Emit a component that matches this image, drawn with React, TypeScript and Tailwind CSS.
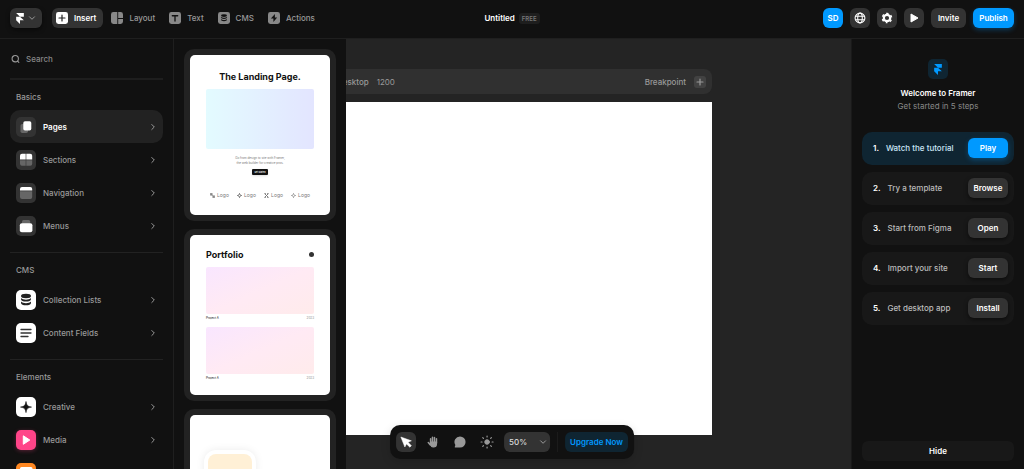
import React from "react";
import type { ReactNode } from "react";

function FramerLogo({ className }: { className?: string }) {
  return (
    <svg viewBox="0 0 14 20" className={className} fill="currentColor" aria-hidden="true">
      <path d="M0 0h14v6.67H7zM0 6.67h14v0L7 6.67l7 6.66H0zM0 13.33h7V20z" />
    </svg>
  );
}

function Chevron({ className, down }: { className?: string; down?: boolean }) {
  return (
    <svg viewBox="0 0 8 8" className={className} fill="none" stroke="currentColor" strokeWidth="1" strokeLinecap="round" strokeLinejoin="round" aria-hidden="true">
      <path d={down ? "M1.5 2.8 4 5.3l2.5-2.5" : "M2.8 1.5 5.3 4 2.8 6.5"} />
    </svg>
  );
}

function Disks({ fill }: { fill: string }) {
  return (
    <g fill={fill}>
      <ellipse cx="10" cy="6" rx="5" ry="2.2" />
      <path d="M5 8c1 1.300 3 1.700 5 1.700s4-.4 5-1.700v1.200c0 1.400-2.200 2.300-5 2.300s-5-.9-5-2.300z" />
      <path d="M5 11.600c1 1.300 3 1.700 5 1.700s4-.4 5-1.700v1.300c0 1.400-2.200 2.400-5 2.400s-5-1-5-2.400z" />
    </g>
  );
}

const navItems: { label: string; icon: ReactNode; active?: boolean }[] = [
  {
    label: "Insert",
    active: true,
    icon: (
      <svg viewBox="0 0 20 20" className="size-3" aria-hidden="true">
        <rect width="20" height="20" rx="4" fill="#fff" />
        <path d="M10 5v10M5 10h10" stroke="#222" strokeWidth="2" strokeLinecap="round" />
      </svg>
    ),
  },
  {
    label: "Layout",
    icon: (
      <svg viewBox="0 0 20 20" className="size-3" fill="#888" aria-hidden="true">
        <path d="M4 0h6.500v20H4a4 4 0 0 1-4-4V4a4 4 0 0 1 4-4zM12 0h4a4 4 0 0 1 4 4v6h-8zM12 11.500h8V16a4 4 0 0 1-4 4h-4z" />
      </svg>
    ),
  },
  {
    label: "Text",
    icon: (
      <svg viewBox="0 0 20 20" className="size-3" aria-hidden="true">
        <rect width="20" height="20" rx="4" fill="#888" />
        <path d="M5.500 6.200h9M10 6.200V15" stroke="#111" strokeWidth="2.200" strokeLinecap="round" />
      </svg>
    ),
  },
  {
    label: "CMS",
    icon: (
      <svg viewBox="0 0 20 20" className="size-3" aria-hidden="true">
        <rect width="20" height="20" rx="4" fill="#888" />
        <Disks fill="#111" />
      </svg>
    ),
  },
  {
    label: "Actions",
    icon: (
      <svg viewBox="0 0 20 20" className="size-3" aria-hidden="true">
        <rect width="20" height="20" rx="4" fill="#888" />
        <path d="M11.500 3.500 4.800 11H9v5.500L15.300 9h-3.800z" fill="#111" />
      </svg>
    ),
  },
];

function Header() {
  const tool = "flex h-5 items-center justify-center rounded-md bg-[#333] text-white";
  return (
    <header className="grid h-[39px] shrink-0 grid-cols-[1fr_auto_1fr] items-center border-b border-[#1f1f1f] px-2.5 pb-[2px]">
      <div className="flex items-center">
        <button aria-label="Main menu" className={`${tool} mr-2.5 w-8 gap-1 shadow-[0_2px_4px_rgba(0,0,0,0.5)]`}>
          <FramerLogo className="h-[11px] w-2" />
          <Chevron down className="size-2 text-[#999]" />
        </button>
        <nav className="flex items-center gap-[6px]">
          {navItems.map((n) => (
            <button
              key={n.label}
              className={
                n.active
                  ? "flex h-5 items-center gap-[6px] rounded-md bg-[#333] px-1 pr-[7px] font-semibold text-white"
                  : "flex h-5 items-center gap-[6px] rounded-md pl-[2px] pr-[6px] font-medium text-[#999]"
              }
            >
              {n.icon}
              {n.label}
            </button>
          ))}
        </nav>
      </div>
      <div className="flex items-center gap-1">
        <h1 className="font-semibold text-white">Untitled</h1>
        <span className="rounded-[3px] bg-[#1e1e1e] px-[3px] text-[6px] font-semibold leading-[11px] text-[#777]">FREE</span>
      </div>
      <div className="flex items-center justify-end gap-[7px] font-semibold">
        <button className="h-5 w-5 rounded-md bg-[#09f] text-center text-white">SD</button>
        <button aria-label="Language" className={`${tool} w-5`}>
          <svg viewBox="0 0 12 12" className="size-3" fill="none" stroke="currentColor" strokeWidth="1.100" aria-hidden="true">
            <circle cx="6" cy="6" r="4.900" />
            <ellipse cx="6" cy="6" rx="2.300" ry="4.900" />
            <path d="M1.400 4.300h9.200M1.400 7.700h9.200" />
          </svg>
        </button>
        <button aria-label="Settings" className={`${tool} w-5`}>
          <svg viewBox="0 0 12 12" className="size-3" fill="none" stroke="currentColor" aria-hidden="true">
            <circle cx="6" cy="6" r="3.200" strokeWidth="2.200" />
            <circle cx="6" cy="6" r="4.600" strokeWidth="1.500" strokeDasharray="2.400 2.417" strokeDashoffset="1.200" transform="rotate(90 6 6)" />
          </svg>
        </button>
        <button aria-label="Preview" className={`${tool} w-5`}>
          <svg viewBox="0 0 12 12" className="size-3" fill="currentColor" stroke="currentColor" strokeLinejoin="round" aria-hidden="true">
            <path d="M3 2v8l7-4z" />
          </svg>
        </button>
        <button className={`${tool} w-[35px]`}>Invite</button>
        <button className="h-5 w-[41px] rounded-md bg-[#09f] text-white shadow-[0_2px_5px_rgba(0,153,255,0.3)]">Publish</button>
      </div>
    </header>
  );
}

const darkTile = "bg-[#333]";
const whiteTile = "bg-white";

const groups: { title: string; rows: { label: string; iconOnly?: boolean; tile: string; active?: boolean; icon: ReactNode }[] }[] = [
  {
    title: "Basics",
    rows: [
      {
        label: "Pages",
        tile: darkTile,
        active: true,
        icon: (
          <>
            <rect x="4.500" y="7" width="7.500" height="9" rx="1.700" fill="#666" />
            <rect x="7.300" y="4.300" width="8" height="9.200" rx="1.700" fill="#fff" />
          </>
        ),
      },
      {
        label: "Sections",
        tile: darkTile,
        icon: (
          <>
            <path d="M6 3.800h3.700v5.700H4V5.800a2 2 0 0 1 2-2zM10.300 3.800H14.200a2 2 0 0 1 2 2v3.700h-5.900z" fill="#fff" />
            <path d="M4 10.200h5.700v5.600H6a2 2 0 0 1-2-2zM10.300 10.200h5.900v3.600a2 2 0 0 1-2 2h-3.900z" fill="#666" />
          </>
        ),
      },
      {
        label: "Navigation",
        tile: darkTile,
        icon: (
          <>
            <path d="M4 8.200h12.200v5.800a2 2 0 0 1-2 2H6a2 2 0 0 1-2-2z" fill="#666" />
            <path d="M6 4h8.200a2 2 0 0 1 2 2v1.500H4V6a2 2 0 0 1 2-2z" fill="#fff" />
          </>
        ),
      },
      {
        label: "Menus",
        tile: darkTile,
        icon: (
          <>
            <rect x="6" y="4" width="8.200" height="4" rx="1.500" fill="#666" />
            <rect x="3.800" y="7.200" width="12.600" height="9" rx="2" fill="#fff" />
          </>
        ),
      },
    ],
  },
  {
    title: "CMS",
    rows: [
      { label: "Collection Lists", tile: whiteTile, icon: <Disks fill="#222" /> },
      {
        label: "Content Fields",
        tile: whiteTile,
        icon: <path d="M5 6.500h10M5 10h10M5 13.500h7" stroke="#333" strokeWidth="1.300" strokeLinecap="round" />,
      },
    ],
  },
  {
    title: "Elements",
    rows: [
      {
        label: "Creative",
        tile: whiteTile,
        icon: <path d="M10 4.500c.7 4 1.600 4.900 5.500 5.600-3.900.7-4.800 1.600-5.500 5.500-.7-3.900-1.600-4.800-5.500-5.500 3.900-.7 4.800-1.600 5.500-5.600z" fill="#111" stroke="#111" strokeWidth=".6" />,
      },
      {
        label: "Media",
        tile: "bg-[#ff4488] shadow-[0_1px_4px_rgba(255,68,136,0.3)]",
        icon: <path d="M7.300 5.800v8.500l6.500-4.250z" fill="#fff" stroke="#fff" strokeLinejoin="round" />,
      },
      {
        label: "Forms",
        iconOnly: true,
        tile: "bg-[#ff8822]",
        icon: <rect x="4" y="4" width="12.500" height="5.500" rx="1.500" fill="#fff" />,
      },
    ],
  },
];

function Sidebar() {
  return (
    <aside className="w-[174px] shrink-0 overflow-hidden border-r border-[#1f1f1f] px-2.5">
      <label className="flex h-[41px] items-center gap-[6px] border-b-2 border-[#1e1e1e] px-[1px]">
        <svg viewBox="0 0 10 10" className="size-2.5 text-[#999]" fill="none" stroke="currentColor" strokeWidth="1.200" strokeLinecap="round" aria-hidden="true">
          <circle cx="4.700" cy="4.700" r="3.500" />
          <path d="m7.300 7.300 1.400 1.400" />
        </svg>
        <input aria-label="Search" placeholder="Search" className="w-full min-w-0 bg-transparent font-medium outline-none placeholder:text-[#888]" />
      </label>
      {groups.map((g) => (
        <section key={g.title} className="border-b border-[#222] pb-2.5">
          <h2 className="flex h-[30px] items-center px-[6px] pt-1 font-medium text-[#999]">{g.title}</h2>
          <ul>
            {g.rows.map((r) => (
              <li key={r.label}>
                <button
                  aria-label={r.label}
                  className={
                    r.active
                      ? "flex h-[33px] w-full items-center gap-[7px] rounded-[10px] bg-[#222] px-[6px] font-semibold text-white"
                      : "flex h-[33px] w-full items-center gap-[7px] rounded-[10px] px-[6px] font-medium text-[#999]"
                  }
                >
                  <span className={`size-5 rounded-[5px] ${r.tile}`}>
                    <svg viewBox="0 0 20 20" className="size-5" fill="none" aria-hidden="true">{r.icon}</svg>
                  </span>
                  {!r.iconOnly && r.label}
                  {!r.iconOnly && <Chevron className="ml-auto size-2 text-[#999]" />}
                </button>
              </li>
            ))}
          </ul>
        </section>
      ))}
    </aside>
  );
}

const logoMarks: ReactNode[] = [
  <path key="a" d="M.5.500h3v3h-3zM4.500 4.500h3v3h-3zM3 3l2 2" fill="#888" stroke="#888" />,
  <path key="b" d="M4 0v3M4 5v3M0 4h3M5 4h3M2 2l1 1M6 2 5 3M2 6l1-1M6 6 5 5" stroke="#777" strokeWidth="1.400" />,
  <path key="c" d="M1 1l6 6M7 1 1 7M1 1h2M7 1H5M1 7h2M7 7H5" stroke="#777" strokeWidth="1.500" />,
  <path key="d" d="M4 0 5.500 2.500h-3zM4 8 2.500 5.500h3zM0 4l2.500-1.500v3zM8 4 5.500 5.500v-3z" fill="#777" />,
];

function Card({ children, label }: { children: ReactNode; label: string }) {
  return (
    <article aria-label={label} className="h-[172px] shrink-0 rounded-[10px] bg-[#222] p-[6px]">
      <div className="flex h-full flex-col overflow-hidden rounded-[5px] bg-white px-4 text-[#111]">{children}</div>
    </article>
  );
}

function Project() {
  return (
    <div>
      <div className="h-[47px] rounded-[2px] bg-linear-to-br from-[#f9e6ff] via-[#ffeaf4] to-[#ffebeb]" />
      <div className="mt-[2px] flex justify-between text-[3px] leading-[4px]">
        <span>Project A</span>
        <span className="text-[#888]">2023</span>
      </div>
    </div>
  );
}

function Previews() {
  return (
    <div className="flex w-[172px] shrink-0 flex-col gap-2 overflow-hidden px-2.5 pt-2.5">
      <Card label="Landing page">
        <h3 className="mt-[15px] text-center text-[9px] font-bold leading-[14px]">The Landing Page.</h3>
        <div className="mt-[5px] h-[60px] shrink-0 rounded-[2px] bg-linear-to-r from-[#e3fbff] to-[#e3e5ff]" />
        <p className="mt-[7px] text-center text-[3px] leading-[5px] text-[#777]">
          Go from design to site with Framer,
          <br />
          the web builder for creative pros.
        </p>
        <span className="mx-auto mt-[3px] rounded-[1px] bg-[#111] px-[2px] text-[2px] font-semibold leading-[6px] text-white shadow">Get Started</span>
        <div className="mt-4 flex justify-between px-1 text-[5px] leading-2 text-[#777]">
          {logoMarks.map((m, i) => (
            <span key={i} className="flex items-center gap-[2px]">
              <svg viewBox="0 0 8 8" className="size-[5px]" fill="none" aria-hidden="true">{m}</svg>
              Logo
            </span>
          ))}
        </div>
      </Card>
      <Card label="Portfolio">
        <div className="mb-[5px] mt-3 flex h-[15px] items-center justify-between">
          <h3 className="text-[9px] font-bold">Portfolio</h3>
          <span className="size-[5px] rounded-full bg-[#333]" />
        </div>
        <div className="flex flex-col gap-[7px]">
          <Project />
          <Project />
        </div>
      </Card>
      <Card label="App">
        <div className="-ml-[2px] mt-[35px] size-[52px] rounded-xl bg-white p-1 shadow-[0_0_8px_rgba(0,0,0,0.08)]">
          <div className="h-full rounded-lg bg-[#fff0d6]" />
        </div>
      </Card>
    </div>
  );
}

function Canvas() {
  return (
    <main className="flex min-w-0 flex-1 justify-end overflow-hidden bg-[#242424] pb-[34px] pr-[139px] pt-[30px]">
      <div className="flex w-[392px] shrink-0 flex-col gap-2">
        <div className="flex h-[25px] items-center gap-2 rounded-lg bg-[#303030] pl-[17px] pr-[6px] text-[#999]">
          <span className="font-medium">Desktop</span>
          <span>1200</span>
          <span className="ml-auto font-medium">Breakpoint</span>
          <button aria-label="Add breakpoint" className="flex size-3 items-center justify-center rounded-[3px] bg-[#424242]">
            <svg viewBox="0 0 8 8" className="size-2" stroke="currentColor" strokeWidth="1.200" strokeLinecap="round" aria-hidden="true">
              <path d="M4 1v6M1 4h6" />
            </svg>
          </button>
        </div>
        <div className="flex-1 bg-white" />
      </div>
    </main>
  );
}

const steps = [
  { text: "Watch the tutorial", action: "Play" },
  { text: "Try a template", action: "Browse" },
  { text: "Start from Figma", action: "Open" },
  { text: "Import your site", action: "Start" },
  { text: "Get desktop app", action: "Install" },
];

function Welcome() {
  return (
    <aside className="flex w-[173px] shrink-0 flex-col border-l border-[#1a1a1a] px-2.5 pb-2 pt-5">
      <div className="mx-auto flex size-5 items-center justify-center rounded-[5px] bg-[#0f2532] text-[#09f]">
        <FramerLogo className="h-[11px] w-2" />
      </div>
      <h2 className="mt-2 text-center font-semibold leading-[13px] text-white">Welcome to Framer</h2>
      <p className="text-center leading-[13px] text-[#888]">Get started in 5 steps</p>
      <ol className="mt-[19px] flex flex-col gap-[7px]">
        {steps.map((s, i) => (
          <li
            key={s.text}
            className={
              i === 0
                ? "flex h-[33px] items-center rounded-[10px] bg-[#0f2532] pb-px pl-[11px] pr-[6px] text-[#cce6f7]"
                : "flex h-[33px] items-center rounded-[10px] bg-[#181818] pb-px pl-[11px] pr-[6px] text-[#bbb]"
            }
          >
            <span className="mr-[7px] font-semibold text-white">{i + 1}.</span>
            <span className="font-medium">{s.text}</span>
            <button
              className={
                i === 0
                  ? "ml-auto h-5 w-10 rounded-md bg-[#09f] font-semibold text-white shadow-[0_2px_5px_rgba(0,153,255,0.3)]"
                  : "ml-auto h-5 w-10 rounded-md bg-[#333] font-semibold text-white shadow-[0_2px_4px_rgba(0,0,0,0.5)]"
              }
            >
              {s.action}
            </button>
          </li>
        ))}
      </ol>
      <button className="mt-auto h-5 rounded-md bg-[#181818] font-semibold text-white">Hide</button>
    </aside>
  );
}

function Toolbar() {
  const item = "flex size-5 items-center justify-center rounded-md";
  return (
    <div className="absolute bottom-2.5 left-1/2 flex h-[34px] -translate-x-1/2 items-center gap-[7px] rounded-[10px] bg-[#111] px-[6px] text-[#999] shadow-[0_3px_10px_rgba(0,0,0,0.15)]">
      <button aria-label="Select" className={`${item} bg-[#333] text-white`}>
        <svg viewBox="0 0 12 12" className="size-3" aria-hidden="true">
          <path d="M.8 1 11.300 4.800 8 6.300l3.300 3.400-1.500 1.500-3.400-3.300L4.800 11z" fill="currentColor" stroke="currentColor" strokeWidth=".5" strokeLinejoin="round" />
        </svg>
      </button>
      <button aria-label="Pan" className={item}>
        <svg viewBox="0 0 12 12" className="size-3" fill="none" stroke="currentColor" strokeWidth="1.500" strokeLinecap="round" strokeLinejoin="round" aria-hidden="true">
          <path d="M3.500 7V2.700M5.400 6V1.200M7.400 6V1.400M9.400 7V2.800M1.200 6.500 3.300 9" />
          <path d="M3.500 6h5.900v2a3 3 0 0 1-3 3H6C4.700 11 4 10 3.500 8.500z" fill="currentColor" strokeWidth="1.200" />
        </svg>
      </button>
      <button aria-label="Comment" className={item}>
        <svg viewBox="0 0 12 12" className="size-3" fill="currentColor" aria-hidden="true">
          <path d="M6 .5a5.500 5.500 0 1 1 0 11H1.300c-.6 0-.8-.6-.5-1L1.300 9A5.500 5.500 0 0 1 6 .5z" />
        </svg>
      </button>
      <button aria-label="Theme" className={item}>
        <svg viewBox="0 0 14 14" className="size-[14px]" fill="currentColor" stroke="currentColor" strokeLinecap="round" aria-hidden="true">
          <circle cx="7" cy="7" r="2.300" />
          <path d="M7 1v1M7 12v1M1 7h1M12 7h1M2.700 2.700l.7.700M10.600 10.600l.7.700M2.700 11.300l.7-.7M10.600 3.400l.7-.7" strokeWidth="1.200" />
        </svg>
      </button>
      <div className="relative flex items-center">
        <select aria-label="Zoom" defaultValue="50" className="h-5 w-[46px] appearance-none rounded-md bg-[#333] pl-[5px] font-medium text-[#ddd]">
          <option value="50">50%</option>
          <option value="100">100%</option>
        </select>
        <Chevron down className="pointer-events-none absolute right-[3px] size-2" />
      </div>
      <span className="h-5 w-px bg-[#1c1c1c]" />
      <button className="h-5 rounded-md bg-[#0f2532] px-[5px] font-semibold text-[#09f]">Upgrade Now</button>
    </div>
  );
}

export default function App() {
  return (
    <div className="relative flex h-screen flex-col overflow-hidden bg-[#111] font-['Inter',sans-serif] text-[8px] leading-3">
      <Header />
      <div className="flex min-h-0 flex-1">
        <Sidebar />
        <Previews />
        <Canvas />
        <Welcome />
      </div>
      <Toolbar />
    </div>
  );
}
